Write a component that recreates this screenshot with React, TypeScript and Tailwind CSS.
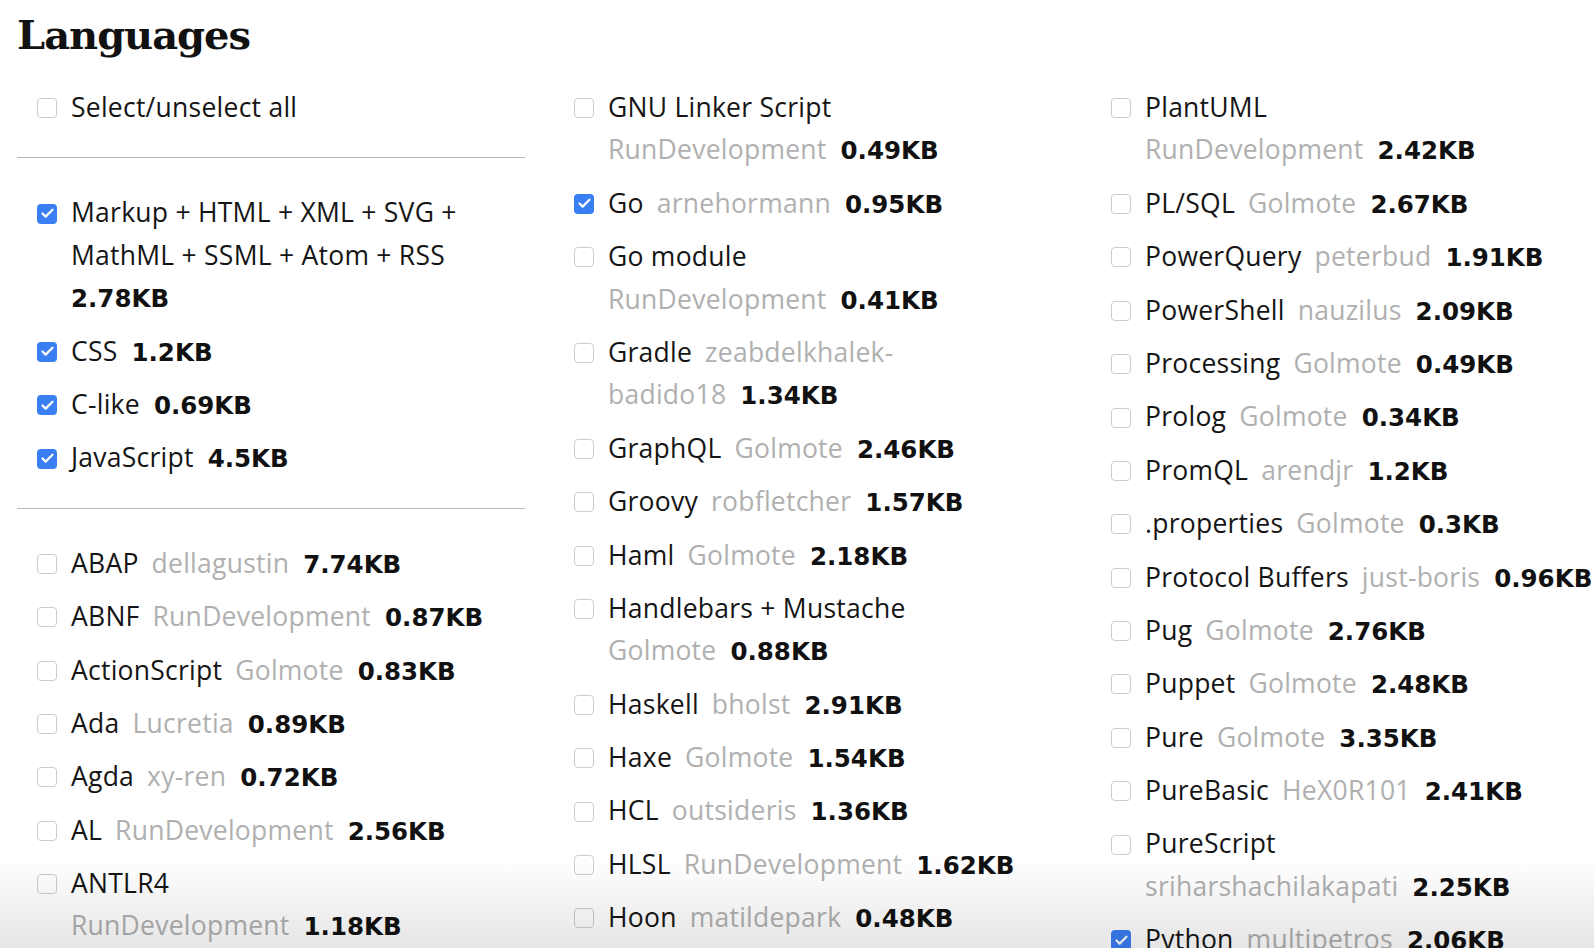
import { Check } from "lucide-react";

type Kind = "name" | "author" | "size";
type Seg = { t: string; k: Kind };
type Item = { lines: Seg[][]; checked?: boolean } | "rule";

const n = (t: string): Seg => ({ t, k: "name" });
const a = (t: string): Seg => ({ t, k: "author" });
const s = (t: string): Seg => ({ t, k: "size" });

// single-line row, or wrapped after the name when `wrap` is set
function lang(name: string, author: string | null, size: string, wrap = false, checked = false): Item {
  const tail = author ? [a(author), s(size)] : [s(size)];
  return { lines: wrap ? [[n(name)], tail] : [[n(name), ...tail]], checked };
}

const col1: Item[] = [
  { lines: [[n("Select/unselect all")]] },
  "rule",
  {
    lines: [[n("Markup + HTML + XML + SVG +")], [n("MathML + SSML + Atom + RSS")], [s("2.78KB")]],
    checked: true,
  },
  lang("CSS", null, "1.2KB", false, true),
  lang("C-like", null, "0.69KB", false, true),
  lang("JavaScript", null, "4.5KB", false, true),
  "rule",
  lang("ABAP", "dellagustin", "7.74KB"),
  lang("ABNF", "RunDevelopment", "0.87KB"),
  lang("ActionScript", "Golmote", "0.83KB"),
  lang("Ada", "Lucretia", "0.89KB"),
  lang("Agda", "xy-ren", "0.72KB"),
  lang("AL", "RunDevelopment", "2.56KB"),
  lang("ANTLR4", "RunDevelopment", "1.18KB", true),
  lang("AppleScript", "Golmote", "1.09KB"),
];

const col2: Item[] = [
  lang("GNU Linker Script", "RunDevelopment", "0.49KB", true),
  lang("Go", "arnehormann", "0.95KB", false, true),
  lang("Go module", "RunDevelopment", "0.41KB", true),
  { lines: [[n("Gradle"), a("zeabdelkhalek-")], [a("badido18"), s("1.34KB")]] },
  lang("GraphQL", "Golmote", "2.46KB"),
  lang("Groovy", "robfletcher", "1.57KB"),
  lang("Haml", "Golmote", "2.18KB"),
  lang("Handlebars + Mustache", "Golmote", "0.88KB", true),
  lang("Haskell", "bholst", "2.91KB"),
  lang("Haxe", "Golmote", "1.54KB"),
  lang("HCL", "outsideris", "1.36KB"),
  lang("HLSL", "RunDevelopment", "1.62KB"),
  lang("Hoon", "matildepark", "0.48KB"),
];

const col3: Item[] = [
  lang("PlantUML", "RunDevelopment", "2.42KB", true),
  lang("PL/SQL", "Golmote", "2.67KB"),
  lang("PowerQuery", "peterbud", "1.91KB"),
  lang("PowerShell", "nauzilus", "2.09KB"),
  lang("Processing", "Golmote", "0.49KB"),
  lang("Prolog", "Golmote", "0.34KB"),
  lang("PromQL", "arendjr", "1.2KB"),
  lang(".properties", "Golmote", "0.3KB"),
  lang("Protocol Buffers", "just-boris", "0.96KB"),
  lang("Pug", "Golmote", "2.76KB"),
  lang("Puppet", "Golmote", "2.48KB"),
  lang("Pure", "Golmote", "3.35KB"),
  lang("PureBasic", "HeX0R101", "2.41KB"),
  lang("PureScript", "sriharshachilakapati", "2.25KB", true),
  lang("Python", "multipetros", "2.06KB", false, true),
];

function Box({ checked }: { checked?: boolean }) {
  if (checked) {
    return (
      <span className="grid h-[20px] w-[20px] place-items-center rounded-[4px] bg-[#3a7ef4] text-white">
        <Check className="h-[15px] w-[15px]" strokeWidth={3.5} />
      </span>
    );
  }
  return <span className="block h-[20px] w-[20px] rounded-[4px] border border-[#cccccc] bg-white" />;
}

function Segment({ seg, first }: { seg: Seg; first: boolean }) {
  if (seg.k === "size")
    return (
      <span
        className={`${first ? "" : "ml-[14px]"} font-['DejaVu_Sans',sans-serif] text-[24.5px] leading-none font-bold tracking-normal text-[#111]`}
      >
        {seg.t}
      </span>
    );
  if (seg.k === "author") return <span className={`${first ? "" : "ml-[13px]"} text-[#b0b0b0]`}>{seg.t}</span>;
  return <span className="text-[#151515]">{seg.t}</span>;
}

function Column({ items }: { items: Item[] }) {
  return (
    <div className="flex flex-col gap-[11px]">
      {items.map((item, i) =>
        item === "rule" ? (
          <div key={i} className="mt-[18px] mb-[22px] h-px w-[508px] bg-[#b8b8b8]" />
        ) : (
          <div key={i} className="flex pl-[20px]">
            <div className="flex h-[42.4px] w-[34px] shrink-0 items-center pt-[2px]">
              <Box checked={item.checked} />
            </div>
            <div className="flex flex-col">
              {item.lines.map((line, j) => (
                <div key={j} className="h-[42.4px] whitespace-nowrap">
                  {line.map((seg, k) => (
                    <Segment key={k} seg={seg} first={k === 0} />
                  ))}
                </div>
              ))}
            </div>
          </div>
        )
      )}
    </div>
  );
}

export default function App() {
  return (
    <div className="relative h-[948px] w-full overflow-hidden bg-white font-['Open_Sans',sans-serif] text-[26.5px] leading-[42.4px] tracking-[0.25px]">
      <div className="pl-[17px] pt-[15px]">
        <h2 className="font-['DejaVu_Serif',serif] text-[40px] leading-[40px] font-bold tracking-[-1px] text-[#111]">
          Languages
        </h2>
        <div className="mt-[31px] grid grid-cols-[537px_537px_520px]">
          <Column items={col1} />
          <Column items={col2} />
          <Column items={col3} />
        </div>
      </div>
      <div className="pointer-events-none absolute inset-x-0 bottom-0 h-[90px] bg-linear-to-b from-transparent to-black/10" />
    </div>
  );
}
